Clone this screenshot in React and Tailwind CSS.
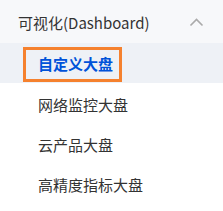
const items = ["网络监控大盘", "云产品大盘", "高精度指标大盘"];

export default function App() {
  return (
    <div
      className="w-[223px] h-[211px] bg-white overflow-hidden"
      style={{ fontFamily: '"Noto Sans CJK SC", "Noto Sans", sans-serif' }}
    >
      {/* group header */}
      <div className="flex items-center justify-between h-[43px] bg-[#f7f8fa] pl-[18px] pr-[19px]">
        <span className="text-[15px] text-[#333] pt-[4px]">可视化(Dashboard)</span>
        <svg width="15" height="9" viewBox="0 0 15 9" fill="none" className="mt-[1px]">
          <path d="M1.5 7.5 L7.5 1.5 L13.5 7.5" stroke="#aaa" strokeWidth="1.6" />
        </svg>
      </div>

      {/* active item */}
      <div className="h-[40px] bg-[#eef1f6] pl-[23px] pt-[4px]">
        <div className="w-[99px] h-[35px] border-[3px] border-[#f5812e] flex items-center pl-[12px]">
          <span className="text-[15px] font-bold text-[#0052d9]">自定义大盘</span>
        </div>
      </div>

      {items.map((label) => (
        <div key={label} className="h-[40px] flex items-center pl-[38px] pt-[4px]">
          <span className="text-[15px] text-[#333]">{label}</span>
        </div>
      ))}
    </div>
  );
}
